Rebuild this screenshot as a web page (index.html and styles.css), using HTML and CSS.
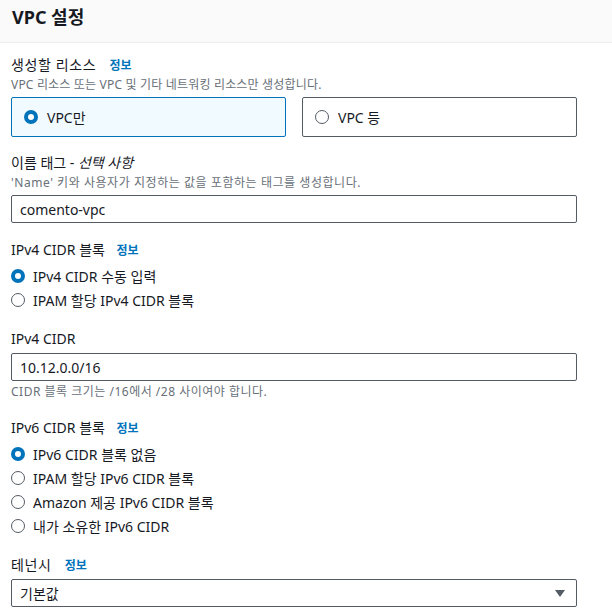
FILE: index.html
```html
<!DOCTYPE html>
<html lang="ko">
<head>
<meta charset="utf-8">
<link rel="stylesheet" href="styles.css">
</head>
<body>
<div class="header"><h2 class="title">VPC 설정</h2></div>
<div class="content">
  <div class="field first">
    <div class="label wide">생성할 리소스 <a class="info">정보</a></div>
    <div class="desc tight">VPC 리소스 또는 VPC 및 기타 네트워킹 리소스만 생성합니다.</div>
    <div class="tiles">
      <div class="tile selected"><span class="radio on"></span>VPC만</div>
      <div class="tile"><span class="radio"></span>VPC 등</div>
    </div>
  </div>
  <div class="field">
    <div class="label">이름 태그 - <i>선택 사항</i></div>
    <div class="desc">'Name' 키와 사용자가 지정하는 값을 포함하는 태그를 생성합니다.</div>
    <div class="input">comento-vpc</div>
  </div>
  <div class="field spaced">
    <div class="label">IPv4 CIDR 블록 <a class="info">정보</a></div>
    <div class="options">
      <div class="option"><span class="radio on"></span>IPv4 CIDR 수동 입력</div>
      <div class="option"><span class="radio"></span>IPAM 할당 IPv4 CIDR 블록</div>
    </div>
  </div>
  <div class="field spaced">
    <div class="label lbl-input">IPv4 CIDR</div>
    <div class="input">10.12.0.0/16</div>
    <div class="hint">CIDR 블록 크기는 /16에서 /28 사이여야 합니다.</div>
  </div>
  <div class="field wider">
    <div class="label">IPv6 CIDR 블록 <a class="info">정보</a></div>
    <div class="options">
      <div class="option"><span class="radio on"></span>IPv6 CIDR 블록 없음</div>
      <div class="option"><span class="radio"></span>IPAM 할당 IPv6 CIDR 블록</div>
      <div class="option"><span class="radio"></span>Amazon 제공 IPv6 CIDR 블록</div>
      <div class="option"><span class="radio"></span>내가 소유한 IPv6 CIDR</div>
    </div>
  </div>
  <div class="field spaced">
    <div class="label lbl-input wide">테넌시 <a class="info">정보</a></div>
    <div class="input select">기본값<span class="caret"></span></div>
  </div>
</div>
</body>
</html>
```
FILE: styles.css
```css
* { box-sizing: border-box; }
body {
  margin: 0;
  background: #fff;
  font-family: "Noto Sans", "Noto Sans CJK KR", sans-serif;
  color: #16191f;
  font-size: 14px;
}
.header {
  height: 43px;
  background: #fafafa;
  border-bottom: 1px solid #eaeded;
  padding: 4px 12px 0;
}
.title {
  margin: 0;
  font-size: 18px;
  font-weight: 700;
  line-height: 26px;
}
.content {
  padding: 0 35px 0 11px;
}
.field { margin-top: 16px; }
.field.first { margin-top: 12px; }
.field.spaced { margin-top: 17px; }
.field.wider { margin-top: 18px; }
.label {
  height: 20px;
  font-size: 14px;
  line-height: 20px;
  color: #16191f;
}
.label.wide { letter-spacing: 0.6px; }
.label.wide .info { letter-spacing: 0; margin-left: 9px; }
.label i { font-style: italic; }
.lbl-input { margin-bottom: 4px; }
.info {
  color: #0073bb;
  font-weight: 700;
  font-size: 12px;
  line-height: 12px;
  margin-left: 8px;
}
.desc {
  font-size: 12px;
  line-height: 16px;
  color: #687078;
  margin-top: 2px;
  margin-bottom: 4px;
  letter-spacing: 0.55px;
}
.desc.tight { letter-spacing: 0.18px; }
.hint {
  font-size: 12px;
  line-height: 16px;
  color: #687078;
  margin-top: 3px;
  letter-spacing: 0.5px;
}
.tiles {
  display: grid;
  grid-template-columns: 1fr 1fr;
  gap: 16px;
}
.tile {
  height: 40px;
  border: 1px solid #545b64;
  border-radius: 2px;
  display: flex;
  align-items: center;
  padding-left: 12px;
  font-size: 14px;
}
.tile.selected {
  background: #f1faff;
  border-color: #0073bb;
}
.tile .radio { margin-right: 9px; }
.radio {
  display: inline-block;
  width: 14px;
  height: 14px;
  border-radius: 50%;
  border: 1.5px solid #545b64;
  background: #fff;
  flex: none;
}
.radio.on {
  border: 4px solid #0073bb;
}
.options { margin-top: 4px; }
.option {
  display: flex;
  align-items: center;
  height: 24px;
  font-size: 14px;
}
.option .radio { margin-right: 8px; }
.input {
  height: 28px;
  border: 1px solid #545b64;
  border-radius: 2px;
  padding: 0 8px;
  display: flex;
  align-items: center;
  font-size: 14px;
}
.select { justify-content: space-between; padding-right: 11px; }
.caret {
  width: 0;
  height: 0;
  border-left: 5px solid transparent;
  border-right: 5px solid transparent;
  border-top: 7px solid #545b64;
}
```
